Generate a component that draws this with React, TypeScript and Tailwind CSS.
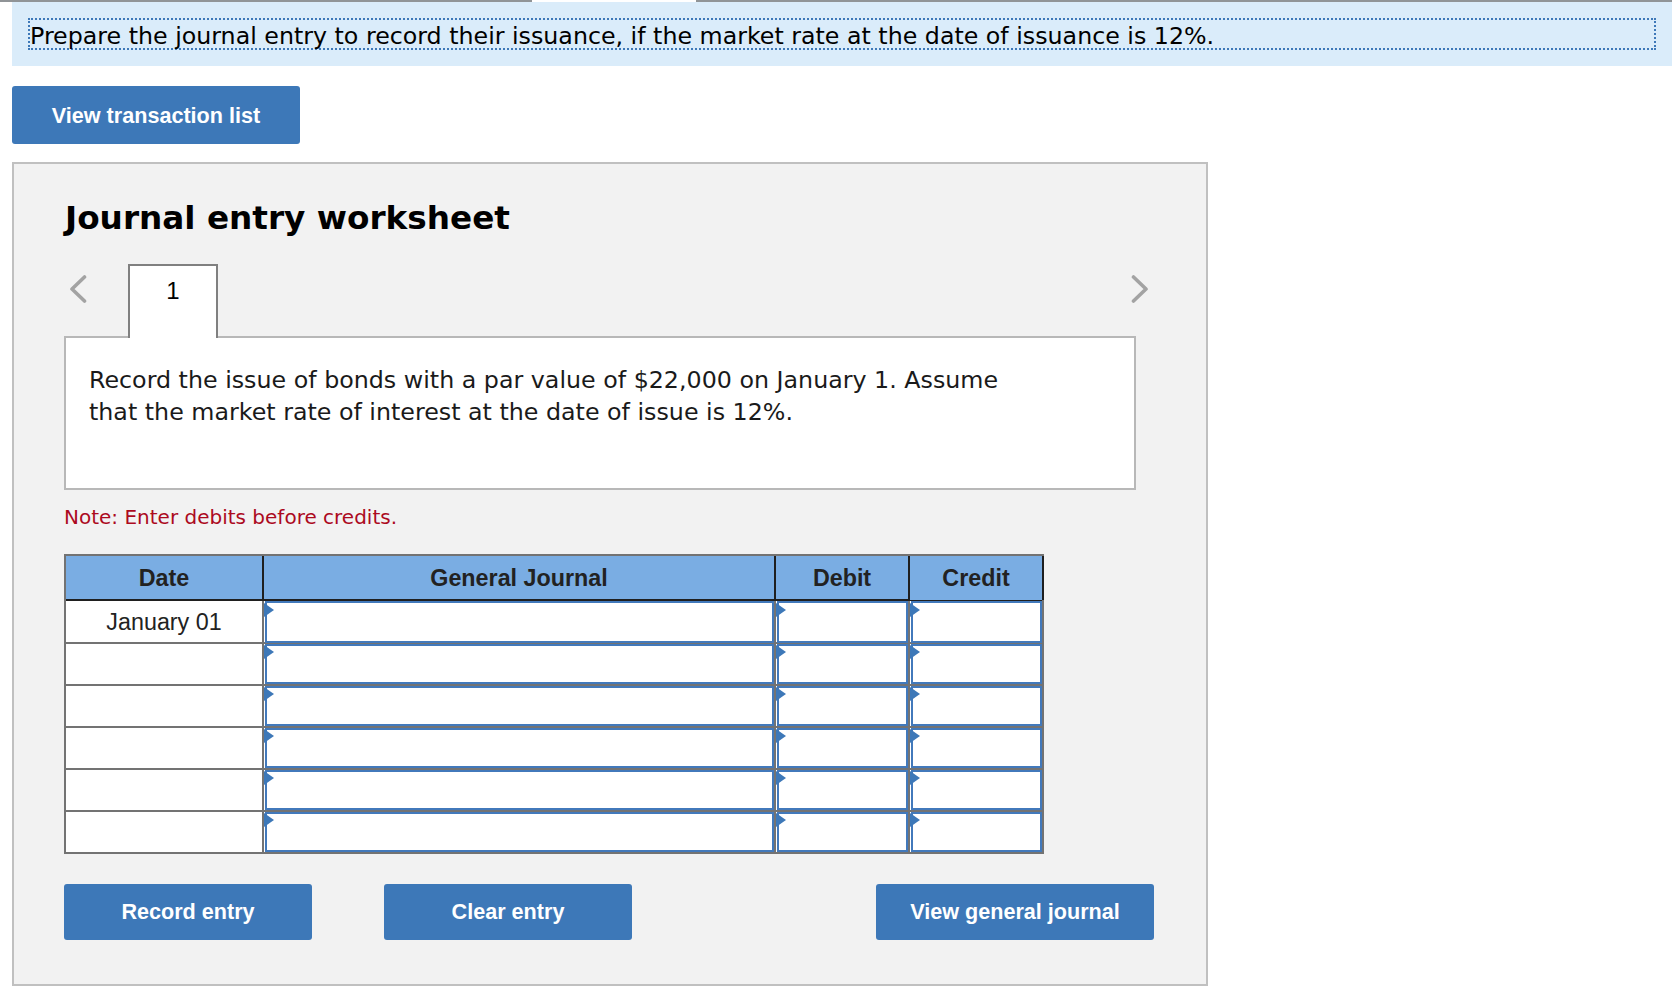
const rows = ["January 01", "", "", "", "", ""];

const Chevron = ({ dir }: { dir: "left" | "right" }) => (
  <svg width="18" height="28" viewBox="0 0 18 28" fill="none" className="mt-[11px]">
    <path
      d={dir === "left" ? "M15.5 2 L3 14 L15.5 26" : "M2.5 2 L15 14 L2.5 26"}
      stroke="#a3a3a3"
      strokeWidth="3.6"
      strokeLinecap="round"
      strokeLinejoin="round"
    />
  </svg>
);

const InputCell = ({ first }: { first: boolean }) => (
  <div className="relative h-full border-l-2 border-[#737373] pl-px">
    <div className="h-full border-2 border-[#4279bb] bg-white" />
    <div
      className={`absolute left-0 h-[14px] w-[10px] bg-[#3d78b8] [clip-path:polygon(0_0,100%_50%,0_100%)] ${first ? "top-[2px]" : "top-px"}`}
    />
  </div>
);

const ActionButton = ({ label, className }: { label: string; className: string }) => (
  <button
    className={`h-14 rounded-[3px] bg-[#3d78b8] font-['Liberation_Sans',Arial,sans-serif] text-[21.6px] font-bold text-white ${className}`}
  >
    {label}
  </button>
);

export default function App() {
  return (
    <div className="min-h-[994px] bg-white font-['DejaVu_Sans',Verdana,sans-serif] text-black">
      <div className="flex h-[2px]">
        <div className="w-[532px] bg-[#909497]" />
        <div className="w-[164px] bg-white" />
        <div className="flex-1 bg-[#909497]" />
      </div>

      {/* Prompt band */}
      <div className="ml-3 h-16 bg-[#daecfa] px-4 pt-4">
        <div className="h-8 border-2 border-dotted border-[#3d78b8] text-[23.72px] leading-8 whitespace-nowrap">
          Prepare the journal entry to record their issuance, if the market rate at the date of issuance is 12%.
        </div>
      </div>

      <ActionButton label="View transaction list" className="ml-3 mt-5 h-[58px] w-[288px] pt-[3px]" />

      {/* Worksheet */}
      <div className="ml-3 mt-[18px] h-[824px] w-[1196px] border-2 border-[#c0c0c0] bg-[#f2f2f2] pl-[50px] pt-8">
        <h2 className="ml-px text-[32.7px] leading-[44px] font-bold">Journal entry worksheet</h2>

        <div className="mt-6 flex w-[1085px] justify-between">
          <div className="flex">
            <div className="w-16 pl-[5px]">
              <Chevron dir="left" />
            </div>
            <div className="relative z-10 -mb-[2px] h-[74px] w-[90px] border-2 border-b-0 border-[#808080] bg-white pt-[11px] text-center font-['Liberation_Sans',Arial,sans-serif] text-[24px] leading-7">
              1
            </div>
          </div>
          <Chevron dir="right" />
        </div>

        <div className="h-[154px] w-[1072px] border-2 border-[#b8b8b8] bg-white pl-[23px] pt-[26px] text-[23.75px] leading-8 text-[#1a1a1a]">
          Record the issue of bonds with a par value of $22,000 on January 1. Assume
          <br />
          that the market rate of interest at the date of issue is 12%.
        </div>

        <p className="mt-[11px] text-[20px] leading-8 text-[#ac0a1e]">Note: Enter debits before credits.</p>

        {/* Journal table */}
        <div className="mt-[21px] w-[980px] border-2 border-[#737373] bg-white font-['Liberation_Sans',Arial,sans-serif] text-[23.3px] text-[#222]">
          <div className="grid h-[45px] grid-cols-[196px_512px_134px_1fr] border-b-2 border-[#1f1f1f] bg-[#7aade3] text-center leading-[44px] font-bold">
            <div>Date</div>
            <div className="border-l-2 border-[#1f1f1f]">General Journal</div>
            <div className="border-l-2 border-[#1f1f1f]">Debit</div>
            <div className="-mr-[2px] border-x-2 border-[#1f1f1f] bg-[#7aade3]">Credit</div>
          </div>
          {rows.map((date, i) => (
            <div
              key={i}
              className={`grid grid-cols-[196px_512px_134px_1fr] ${i === 0 ? "h-[43px] border-b-2 border-[#737373]" : i < 5 ? "h-[42px] border-b-2 border-[#737373]" : "h-10"}`}
            >
              <div className="text-center leading-[42px]">{date}</div>
              <InputCell first={i === 0} />
              <InputCell first={i === 0} />
              <InputCell first={i === 0} />
            </div>
          ))}
        </div>

        <div className="mt-[30px] flex w-[1090px]">
          <ActionButton label="Record entry" className="w-[248px] pt-px" />
          <ActionButton label="Clear entry" className="ml-[72px] w-[248px] pt-px" />
          <ActionButton label="View general journal" className="ml-auto w-[278px] pt-px" />
        </div>
      </div>
    </div>
  );
}
